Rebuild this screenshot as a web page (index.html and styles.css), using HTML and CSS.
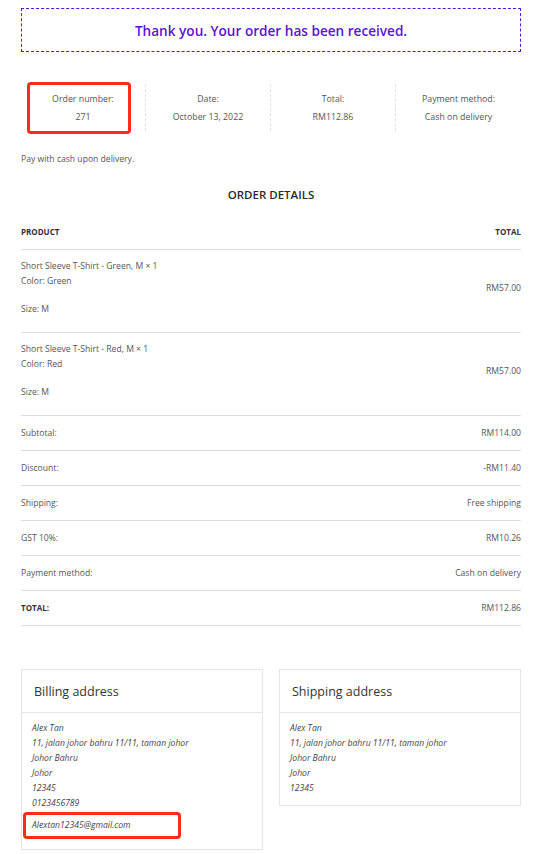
FILE: index.html
```html
<!DOCTYPE html>
<html lang="en">
<head>
<meta charset="utf-8">
<title>Order received</title>
<link rel="stylesheet" href="styles.css">
</head>
<body>
<div class="page">
  <div class="notice">Thank you. Your order has been received.</div>

  <ul class="overview">
    <li class="ov-item">
      <span class="ov-label">Order number:</span>
      <strong class="ov-value">271</strong>
      <span class="mark mark-order"></span>
    </li>
    <li class="ov-item">
      <span class="ov-label">Date:</span>
      <strong class="ov-value">October 13, 2022</strong>
    </li>
    <li class="ov-item">
      <span class="ov-label">Total:</span>
      <strong class="ov-value">RM112.86</strong>
    </li>
    <li class="ov-item">
      <span class="ov-label">Payment method:</span>
      <strong class="ov-value">Cash on delivery</strong>
    </li>
  </ul>

  <p class="pay-note">Pay with cash upon delivery.</p>

  <h2 class="details-title">ORDER DETAILS</h2>

  <div class="table">
    <div class="row head">
      <span>PRODUCT</span>
      <span>TOTAL</span>
    </div>
    <div class="row item">
      <div class="item-info">
        <div class="item-name">Short Sleeve T-Shirt - Green, M × 1</div>
        <div class="item-meta">Color: Green</div>
        <div class="item-meta size">Size: M</div>
      </div>
      <span>RM57.00</span>
    </div>
    <div class="row item">
      <div class="item-info">
        <div class="item-name">Short Sleeve T-Shirt - Red, M × 1</div>
        <div class="item-meta">Color: Red</div>
        <div class="item-meta size">Size: M</div>
      </div>
      <span>RM57.00</span>
    </div>
    <div class="row foot"><span>Subtotal:</span><span>RM114.00</span></div>
    <div class="row foot"><span>Discount:</span><span>-RM11.40</span></div>
    <div class="row foot"><span>Shipping:</span><span>Free shipping</span></div>
    <div class="row foot"><span>GST 10%:</span><span>RM10.26</span></div>
    <div class="row foot"><span>Payment method:</span><span>Cash on delivery</span></div>
    <div class="row foot total"><span>TOTAL:</span><span>RM112.86</span></div>
  </div>

  <div class="addresses">
    <section class="addr">
      <h3 class="addr-title">Billing address</h3>
      <address class="addr-body">
        <span class="line">Alex Tan</span>
        <span class="line">11, jalan johor bahru 11/11, taman johor</span>
        <span class="line">Johor Bahru</span>
        <span class="line">Johor</span>
        <span class="line">12345</span>
        <span class="line">0123456789</span>
        <span class="line email">Alextan12345@gmail.com<span class="mark mark-email"></span></span>
      </address>
    </section>
    <section class="addr">
      <h3 class="addr-title">Shipping address</h3>
      <address class="addr-body">
        <span class="line">Alex Tan</span>
        <span class="line">11, jalan johor bahru 11/11, taman johor</span>
        <span class="line">Johor Bahru</span>
        <span class="line">Johor</span>
        <span class="line">12345</span>
      </address>
    </section>
  </div>
</div>
</body>
</html>
```

FILE: styles.css
```css
* { box-sizing: border-box; }
html, body { margin: 0; padding: 0; background: #fff; }
body {
  font-family: "Open Sans", "Noto Sans", Arial, sans-serif;
  font-size: 8.6px;
  color: #555;
}
.page {
  width: 500px;
  margin-left: 21px;
  padding-top: 8px;
}
.notice {
  height: 44px;
  border: 1px dashed #5a14d2;
  color: #5a14d2;
  font-size: 13.6px;
  font-weight: 600;
  display: flex;
  align-items: center;
  justify-content: center;
}
.overview {
  list-style: none;
  margin: 32px 0 0;
  padding: 0;
  display: grid;
  grid-template-columns: repeat(4, 1fr);
}
.ov-item {
  position: relative;
  height: 47px;
  display: flex;
  flex-direction: column;
  align-items: center;
  justify-content: center;
  gap: 6px;
  border-right: 1px dashed #e2e2e2;
}
.ov-item:last-child { border-right: none; }
.ov-label, .ov-value { font-size: 8.8px; line-height: 12px; font-weight: 400; color: #555; }
.mark {
  position: absolute;
  border: 3px solid #ff2a1a;
  border-radius: 4px;
}
.mark-order { left: 6px; top: -2px; width: 104px; height: 52px; }
.pay-note { margin: 22px 0 0; line-height: 12px; }
.details-title {
  margin: 22px 0 0;
  text-align: center;
  font-size: 11.5px;
  font-weight: 600;
  color: #2a2a2a;
  line-height: 16px;
}
.table { margin-top: 12px; }
.row {
  display: flex;
  justify-content: space-between;
  align-items: center;
  border-bottom: 1px solid #ddd;
  line-height: 12px;
}
.row.head { height: 35px; font-weight: 700; color: #333; font-size: 8px; }
.row.item { padding: 9px 0 15px; }
.item-name, .item-meta { line-height: 15px; }
.item-meta.size { margin-top: 13px; }
.row.foot { height: 35px; }
.row.total span:first-child { font-weight: 700; color: #333; font-size: 8px; }
.addresses {
  margin-top: 43px;
  display: grid;
  grid-template-columns: 1fr 1fr;
  gap: 16px;
  align-items: start;
}
.addr { border: 1px solid #e4e4e4; }
.addr-title {
  margin: 0;
  height: 43px;
  padding-left: 12px;
  display: flex;
  align-items: center;
  font-size: 12.5px;
  font-weight: 400;
  color: #333;
  border-bottom: 1px solid #e4e4e4;
}
.addr-body {
  display: flex;
  flex-direction: column;
  padding: 8px 10px 9px;
  font-style: italic;
  line-height: 15px;
  color: #444;
}
.line.email { position: relative; margin-top: 7px; margin-bottom: 7px; }
.mark-email { left: -9px; top: -6px; width: 158px; height: 27px; }
```
